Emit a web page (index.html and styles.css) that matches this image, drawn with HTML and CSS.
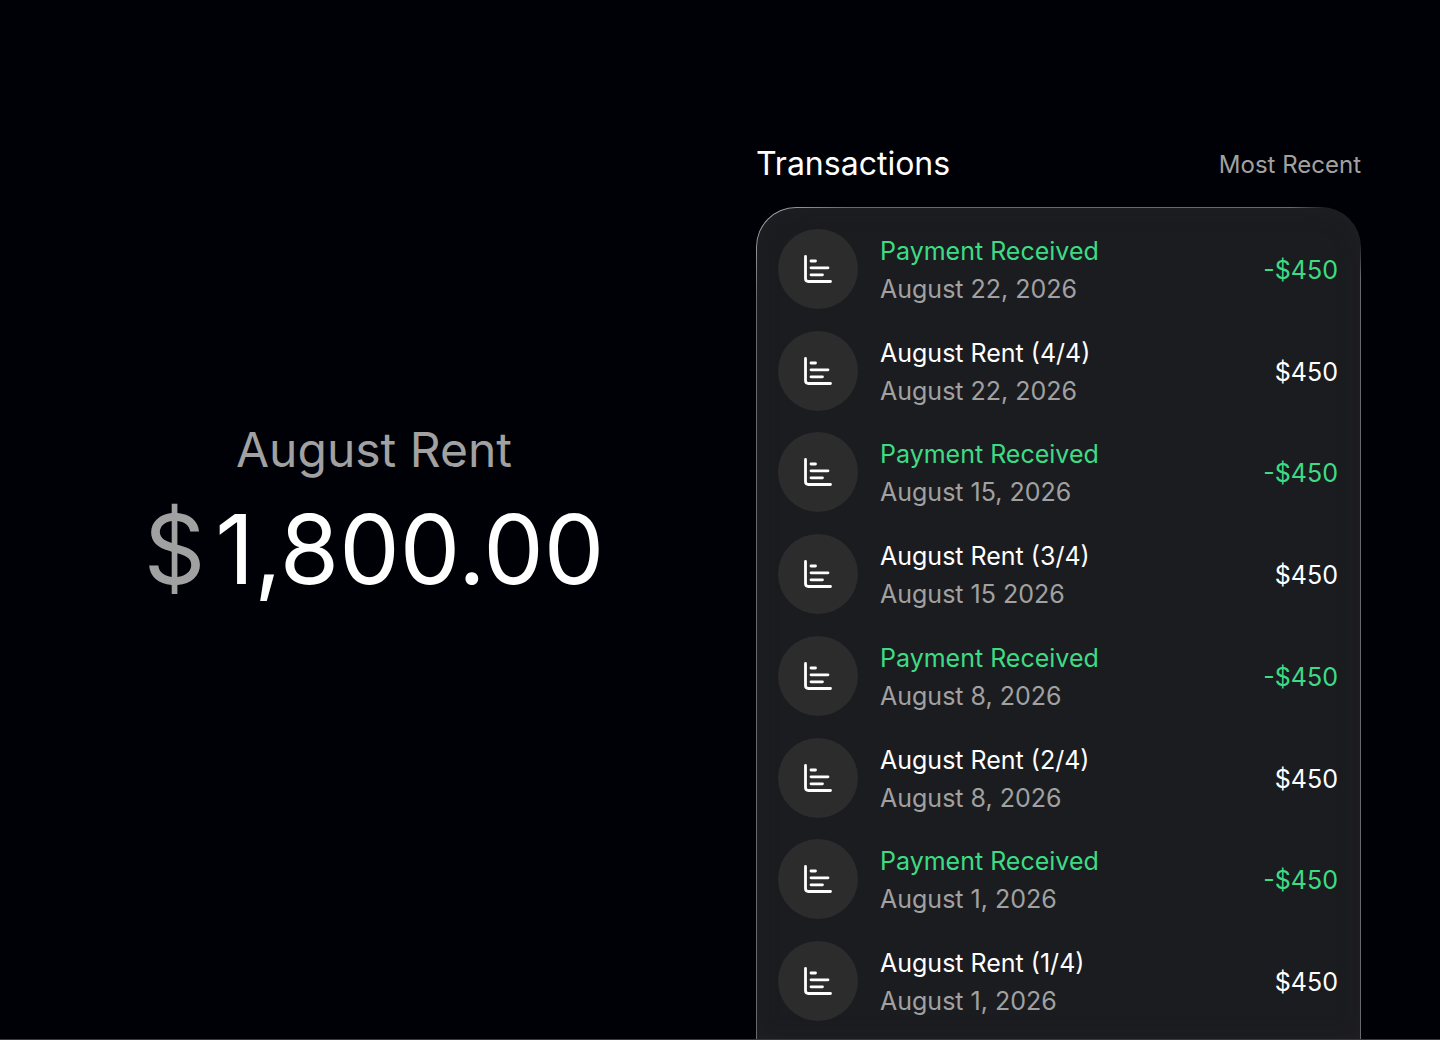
FILE: index.html
```
<!DOCTYPE html>
<html lang="en">

<head>
    <meta charset="UTF-8">
    <meta name="viewport" content="width=device-width, initial-scale=1.0">
    <title>August Rent</title>
    <link rel="stylesheet" href="styles.css">
</head>

<body>
    <!-- chart icon, shared by all transaction rows -->
    <svg class="hidden">
        <symbol id="chart-icon" viewBox="0 0 28 28">
            <path d="M1.5 1.5V23.5Q1.5 26.5 4.5 26.5H26.5M7 6H11.5M7 12.8H24M7 19.8H18.5" />
        </symbol>
    </svg>

    <main class="container">
        <section class="balance">
            <h1>August Rent</h1>
            <p class="amount"><span class="currency">$</span><span>1,800.00</span></p>
        </section>

        <section class="transactions">
            <header class="transactions-header">
                <h2>Transactions</h2>
                <span class="sort">Most Recent</span>
            </header>

            <ul class="panel">
                <li class="transaction payment">
                    <span class="icon"><svg><use href="#chart-icon" /></svg></span>
                    <div class="details">
                        <span class="name">Payment Received</span>
                        <span class="date">August 22, 2026</span>
                    </div>
                    <span class="value">-$450</span>
                </li>
                <li class="transaction">
                    <span class="icon"><svg><use href="#chart-icon" /></svg></span>
                    <div class="details">
                        <span class="name">August Rent (4/4)</span>
                        <span class="date">August 22, 2026</span>
                    </div>
                    <span class="value">$450</span>
                </li>
                <li class="transaction payment">
                    <span class="icon"><svg><use href="#chart-icon" /></svg></span>
                    <div class="details">
                        <span class="name">Payment Received</span>
                        <span class="date">August 15, 2026</span>
                    </div>
                    <span class="value">-$450</span>
                </li>
                <li class="transaction">
                    <span class="icon"><svg><use href="#chart-icon" /></svg></span>
                    <div class="details">
                        <span class="name">August Rent (3/4)</span>
                        <span class="date">August 15 2026</span>
                    </div>
                    <span class="value">$450</span>
                </li>
                <li class="transaction payment">
                    <span class="icon"><svg><use href="#chart-icon" /></svg></span>
                    <div class="details">
                        <span class="name">Payment Received</span>
                        <span class="date">August 8, 2026</span>
                    </div>
                    <span class="value">-$450</span>
                </li>
                <li class="transaction">
                    <span class="icon"><svg><use href="#chart-icon" /></svg></span>
                    <div class="details">
                        <span class="name">August Rent (2/4)</span>
                        <span class="date">August 8, 2026</span>
                    </div>
                    <span class="value">$450</span>
                </li>
                <li class="transaction payment">
                    <span class="icon"><svg><use href="#chart-icon" /></svg></span>
                    <div class="details">
                        <span class="name">Payment Received</span>
                        <span class="date">August 1, 2026</span>
                    </div>
                    <span class="value">-$450</span>
                </li>
                <li class="transaction">
                    <span class="icon"><svg><use href="#chart-icon" /></svg></span>
                    <div class="details">
                        <span class="name">August Rent (1/4)</span>
                        <span class="date">August 1, 2026</span>
                    </div>
                    <span class="value">$450</span>
                </li>
            </ul>
        </section>
    </main>
</body>

</html>
```

FILE: styles.css
```
* {
    box-sizing: border-box;
}

body {
    font-family: Inter, "Liberation Sans", sans-serif;
    background-color: #000106;
    margin: 0;
    color: white;
}

h1,
h2,
p,
ul {
    margin: 0;
    padding: 0;
    font-weight: 400;
}

.hidden {
    display: none;
}

.container {
    display: grid;
    grid-template-columns: 748fr 605fr;
    gap: 8px;
    min-height: 100vh;
    padding-right: 79px;
    border-bottom: 1px solid #3a393c;
}

.balance {
    display: flex;
    flex-direction: column;
    align-items: center;
    justify-content: center;
    text-align: center;
    padding-bottom: 2px;
}

.balance h1 {
    font-size: 48px;
    line-height: 60px;
    color: #a1a1a1;
}

.amount {
    display: flex;
    gap: 10px;
    font-size: 96px;
    line-height: 138px;
}

.currency {
    color: #a1a1a1;
}

.transactions {
    display: flex;
    flex-direction: column;
    padding-top: 140px;
}

.transactions-header {
    display: flex;
    align-items: center;
    justify-content: space-between;
    margin-bottom: 19px;
}

.transactions-header h2 {
    font-size: 32px;
    line-height: 48px;
}

.sort {
    font-size: 24px;
    color: #a1a1a1;
}

/* the border is a gradient: bright top left corner, faded top right one */
.panel {
    flex: 1;
    display: flex;
    flex-direction: column;
    justify-content: space-between;
    padding: 21px 22px 18px 21px;
    list-style: none;
    background:
        linear-gradient(#1b1c20, #1b1c20) padding-box,
        radial-gradient(circle at 0 0, #a4a4a6 20px, transparent 90px) border-box,
        radial-gradient(circle at 100% 0, #1e1e20 36px, transparent 70px) border-box,
        linear-gradient(#69696c, #69696c) border-box;
    border: 1px solid transparent;
    border-bottom: 0;
    border-radius: 40px 40px 0 0;
    box-shadow: inset 0 0 20px rgba(36, 34, 36, 0.6);
}

.transaction {
    display: flex;
    align-items: center;
    gap: 22px;
    font-size: 25px;
    line-height: 38px;
}

.icon {
    display: flex;
    align-items: center;
    justify-content: center;
    width: 80px;
    height: 80px;
    border-radius: 50%;
    background-color: #2c2c2d;
}

.icon svg {
    width: 28px;
    height: 28px;
    fill: none;
    stroke: white;
    stroke-width: 2.8;
    stroke-linecap: round;
}

.details {
    flex: 1;
    display: flex;
    flex-direction: column;
}

.details,
.value {
    padding-top: 2px;
}

.date {
    color: #a1a1a1;
}

.payment .name,
.payment .value {
    color: #3ddc84;
}
```
